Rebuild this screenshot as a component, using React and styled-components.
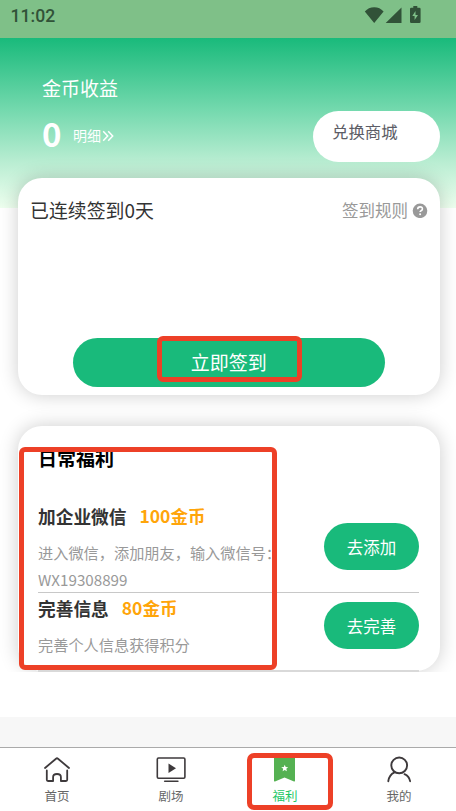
import React from "react";
import styled, { createGlobalStyle } from "styled-components";

const GlobalStyle = createGlobalStyle`
  * { box-sizing: border-box; }
  body { margin: 0; background: #fff; }
  button { border: 0; padding: 0; font: inherit; }
`;

const Screen = styled.div`
  position: relative;
  display: flex;
  flex-direction: column;
  width: 456px;
  height: 811px;
  overflow: hidden;
  background: #fff;
  font-family: "Noto Sans CJK SC", "Noto Sans", sans-serif;
  white-space: nowrap;
`;

const StatusBar = styled.header`
  display: flex;
  flex: none;
  justify-content: space-between;
  height: 38px;
  padding: 0 34px 0 10.5px;
  background: #7fc088;
  color: #315238;
  font: 500 17.6px/33px Roboto, sans-serif;
`;

const StatusIcons = styled.svg`
  width: 58px;
  height: 20px;
  margin-top: 5px;
`;

const Content = styled.main`
  flex: none;
  height: 634px;
  overflow: hidden;
  background: linear-gradient(#19ba7b 0, #74d9ae 72px, #b9edd2 124px, #eeffef 170px, #fff 170px);
`;

const Earnings = styled.section`
  display: flex;
  justify-content: space-between;
  height: 139.5px;
  padding: 0 16px 0 42px;
  color: #fff;
`;

const EarningsTitle = styled.h1`
  margin: 36px 0 0;
  font-size: 19px;
  font-weight: 400;
  line-height: 28px;
`;

const Balance = styled.div`
  display: flex;
  align-items: center;
  height: 40px;
  margin-top: 11px;
`;

const Amount = styled.strong`
  width: 31px;
  font-size: 33px;
  line-height: 40px;
`;

const Details = styled.span`
  display: flex;
  align-items: center;
  padding-top: 4px;
  font-size: 14px;
  line-height: 20px;
`;

const Chevrons = styled.svg`
  width: 12px;
  height: 12px;
  margin: 2px 0 0 1px;
`;

const MallButton = styled.button`
  width: 127px;
  height: 50.5px;
  margin-top: 73px;
  padding: 0 0 11px 19px;
  border-radius: 26px;
  background: #fff;
  color: #5c5d66;
  font-size: 16.4px;
  text-align: left;
`;

const Card = styled.section`
  display: flex;
  flex-direction: column;
  width: 422px;
  height: ${({ $height }) => $height}px;
  margin: 0 0 30.5px 18px;
  padding: ${({ $padding }) => $padding};
  border-radius: 24px;
  background: #fff;
  box-shadow: 0 0 19px rgba(0, 0, 0, 0.2);
`;

const CheckInHeader = styled.div`
  display: flex;
  align-items: center;
  justify-content: space-between;
  height: 30px;
  color: #333;
  font-size: 18.9px;
`;

const Rules = styled.span`
  display: flex;
  align-items: center;
  gap: 4px;
  color: #999;
  font-size: 16.5px;
`;

const HelpIcon = styled.svg`
  width: 16px;
  height: 16px;
`;

const ActionButton = styled.button`
  flex: none;
  width: ${({ $wide }) => ($wide ? 311.5 : 95)}px;
  height: ${({ $wide }) => ($wide ? 48.5 : 47)}px;
  margin: ${({ $wide }) => ($wide ? "auto 0 0 43px" : "0")};
  padding-bottom: ${({ $wide }) => ($wide ? 2 : 0)}px;
  border-radius: 25px;
  background: #19ba7b;
  color: #fff;
  font-size: ${({ $wide }) => ($wide ? 19 : 16.5)}px;
`;

const SectionTitle = styled.h2`
  margin: 0;
  color: #000;
  font-size: 19px;
  line-height: 28px;
`;

const Task = styled.article`
  display: flex;
  flex: none;
  align-items: center;
  justify-content: space-between;
  height: ${({ $height }) => $height}px;
  margin-top: ${({ $gap }) => $gap}px;
  padding-bottom: ${({ $bottom }) => $bottom}px;
  border-bottom: ${({ $line }) => $line};
`;

const TaskBody = styled.div`
  align-self: flex-start;
  width: 250px;
  padding-top: ${({ $top }) => $top}px;
`;

const TaskTitle = styled.h3`
  display: flex;
  gap: 13px;
  margin: 0;
  color: #333;
  font-size: 17.7px;
  line-height: 26px;
`;

const Reward = styled.span`
  color: #ffa50a;
  font-size: 17.5px;
`;

const Description = styled.p`
  margin: 10px 0 0;
  color: #999;
  font-size: 15.2px;
  line-height: 27px;
  white-space: pre-line;
`;

const BottomStrip = styled.div`
  flex: none;
  height: 30px;
  margin-top: 45px;
  background: #f7f7f7;
`;

const TabBar = styled.nav`
  display: grid;
  grid-template-columns: repeat(4, 114px);
  height: 64px;
  border-top: 1px solid #aaa;
  background: #fff;
`;

const Tab = styled.a`
  display: flex;
  flex-direction: column;
  align-items: center;
  padding-top: 7px;
  color: ${({ $active }) => ($active ? "#1ac765" : "#666")};
  font-size: 12.5px;
  line-height: 18px;
`;

const TabIcon = styled.svg`
  width: 32px;
  height: 30px;
  margin-bottom: 2px;
`;

const Highlight = styled.div`
  position: absolute;
  left: ${({ $x }) => $x}px;
  top: ${({ $y }) => $y}px;
  width: ${({ $w }) => $w}px;
  height: ${({ $h }) => $h}px;
  border: 5px solid #ed4027;
  border-radius: ${({ $r }) => $r || 6}px;
  pointer-events: none;
`;

const tasks = [
  { title: "加企业微信", reward: "100金币", text: "进入微信，添加朋友，输入微信号：\nWX19308899", action: "去添加", height: 90.5, gap: 31, bottom: 1.5, top: 0, line: "1px solid #c8c8c8" },
  { title: "完善信息", reward: "80金币", text: "完善个人信息获得积分", action: "去完善", height: 79, gap: 0, bottom: 12, top: 1.5, line: "2px solid #d9d9d9" },
];

const icons = {
  home: (
    <g fill="none" stroke="#3e3a3c" strokeWidth="1.8" strokeLinecap="round" strokeLinejoin="round">
      <path d="M4 13 15 3.7q1-.8 2 0L28 13M5.8 15.5v9.3q0 1.2 1.2 1.2h5.1v-4q0-3 3.9-3t3.9 3v4H25q1.2 0 1.2-1.2v-9.3" />
    </g>
  ),
  video: (
    <g fill="none" stroke="#3e3a3c" strokeWidth="1.6" strokeLinecap="round">
      <rect x="2.3" y="3" width="27.6" height="20.2" rx="1.2" />
      <path d="M9.7 26.2h13.2" />
      <path d="m13.5 8.5 7.5 4.7-7.5 4.7z" fill="#3e3a3c" stroke="none" />
    </g>
  ),
  bonus: (
    <>
      <path d="M5 3q0-1 1-1h19q1 0 1 1v22.8q0 1-1 .6L15.5 22.5 6 26.4q-1 .4-1-.6z" fill="#55b152" />
      <path d="m15.7 9.7 1 2.3 2.5.2-1.9 1.6.6 2.5-2.2-1.3-2.1 1.3.6-2.5-2-1.6 2.6-.2z" fill="#fff" />
    </>
  ),
  user: (
    <g fill="none" stroke="#3e3a3c" strokeWidth="1.9" strokeLinecap="round">
      <circle cx="16.2" cy="10.4" r="7.9" />
      <path d="M5.3 26.2q.8-6.3 6.2-8.8M21.5 19.2q4.7 2.1 5.6 7" />
    </g>
  ),
};

const tabs = [
  ["首页", "home"],
  ["剧场", "video"],
  ["福利", "bonus"],
  ["我的", "user"],
];

export default function App() {
  return (
    <Screen>
      <GlobalStyle />
      <StatusBar>
        <span>11:02</span>
        <StatusIcons viewBox="0 0 58 20" fill="#315238">
          <path d="M.8 6.5Q4.5 2.2 10.2 2.2t9.4 4.3L10.2 18zM21.7 18 37.5 2.6V18z" />
          <path fillRule="evenodd" d="M49.3 1h4v1.7h2q1.3 0 1.3 1.3v12.7q0 1.3-1.3 1.3h-8q-1.3 0-1.3-1.3V4q0-1.3 1.3-1.3h2zM51.5 6l-3.2 5h2.3v4l3.4-5h-2.5z" />
        </StatusIcons>
      </StatusBar>
      <Content>
        <Earnings>
          <div>
            <EarningsTitle>金币收益</EarningsTitle>
            <Balance>
              <Amount>0</Amount>
              <Details>
                明细
                <Chevrons viewBox="0 0 12 12" fill="none" stroke="#fff" strokeWidth="1.5">
                  <path d="m1.2 1.2 4.5 4.8-4.5 4.8M6.2 1.2 10.7 6l-4.5 4.8" />
                </Chevrons>
              </Details>
            </Balance>
          </div>
          <MallButton>兑换商城</MallButton>
        </Earnings>
        <Card $height={217.5} $padding="17px 12px 8.5px">
          <CheckInHeader>
            <span>已连续签到0天</span>
            <Rules>
              签到规则
              <HelpIcon viewBox="0 0 16 16">
                <circle cx="8" cy="8.8" r="7.3" fill="#999" />
                <path d="M5.7 7.3q0-2.4 2.4-2.4t2.3 2q0 1.2-1.3 1.8-1 .5-1 1.4" fill="none" stroke="#fff" strokeWidth="1.6" />
                <circle cx="8.1" cy="12.2" r="1" fill="#fff" />
              </HelpIcon>
            </Rules>
          </CheckInHeader>
          <ActionButton $wide>立即签到</ActionButton>
        </Card>
        <Card $height={245.5} $padding="18px 21px 0 20px">
          <SectionTitle>日常福利</SectionTitle>
          {tasks.map((task) => (
            <Task key={task.title} $height={task.height} $gap={task.gap} $bottom={task.bottom} $line={task.line}>
              <TaskBody $top={task.top}>
                <TaskTitle>
                  {task.title}
                  <Reward>{task.reward}</Reward>
                </TaskTitle>
                <Description>{task.text}</Description>
              </TaskBody>
              <ActionButton>{task.action}</ActionButton>
            </Task>
          ))}
        </Card>
      </Content>
      <BottomStrip />
      <TabBar>
        {tabs.map(([label, icon]) => (
          <Tab key={icon} $active={icon === "bonus"}>
            <TabIcon viewBox="0 0 32 30">{icons[icon]}</TabIcon>
            {label}
          </Tab>
        ))}
      </TabBar>
      <Highlight $x={157} $y={336} $w={145} $h={46} />
      <Highlight $x={19} $y={447} $w={258} $h={223} />
      <Highlight $x={247} $y={753} $w={86} $h={57} $r={7} />
    </Screen>
  );
}
